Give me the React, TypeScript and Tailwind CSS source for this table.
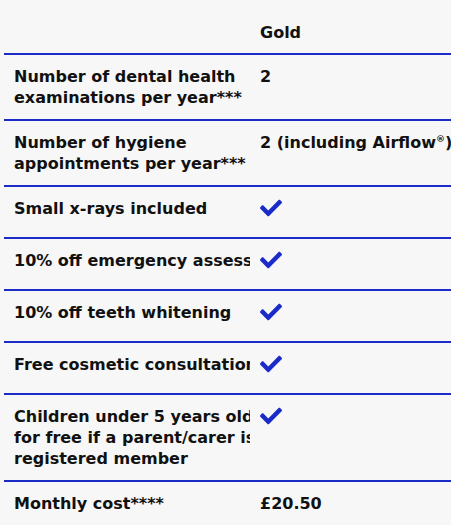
import { FaCheck } from "react-icons/fa"
import type { ReactNode } from "react"

type Row = {
  label: string[]
  value?: ReactNode
  check?: boolean
}

const rows: Row[] = [
  { label: ["Number of dental health", "examinations per year***"], value: "2" },
  {
    label: ["Number of hygiene", "appointments per year***"],
    value: (
      <>
        2 (including Airflow<sup className="text-[9px] -top-[6px]">®</sup>)
      </>
    ),
  },
  { label: ["Small x-rays included"], check: true },
  { label: ["10% off emergency assessments"], check: true },
  { label: ["10% off teeth whitening"], check: true },
  { label: ["Free cosmetic consultation"], check: true },
  {
    label: ["Children under 5 years old seen", "for free if a parent/carer is a", "registered member"],
    check: true,
  },
  { label: ["Monthly cost****"], value: "£20.50" },
]

export default function App() {
  return (
    <div
      className="w-[451px] h-[525px] overflow-hidden bg-[#f7f7f7] text-[#111111] pt-3 pl-1"
      style={{ fontFamily: '"DejaVu Sans", Arial, sans-serif' }}
    >
      <table className="w-[600px] border-collapse text-[16px] leading-[21px] font-bold">
        <thead>
          <tr className="border-b-2 border-[#1b2bc8]">
            <th className="w-[256px] pl-[10px] py-[10px]"></th>
            <th className="py-[10px] text-left font-bold">Gold</th>
          </tr>
        </thead>
        <tbody>
          {rows.map((row, i) => (
            <tr key={i} className="border-b-2 border-[#1b2bc8]">
              <td className="w-[256px] pl-[10px] pr-[10px] py-[11px] align-top">
                <div className="w-[236px] overflow-hidden whitespace-nowrap">
                  {row.label.map((line) => (
                    <div key={line}>{line}</div>
                  ))}
                </div>
              </td>
              <td className="py-[11px] align-top whitespace-nowrap">
                {row.check ? (
                  <div className="h-[29px]">
                    <FaCheck className="w-[22px] h-[22px] -mt-[1px] text-[#1b2bc8]" />
                  </div>
                ) : (
                  row.value
                )}
              </td>
            </tr>
          ))}
        </tbody>
      </table>
    </div>
  )
}
